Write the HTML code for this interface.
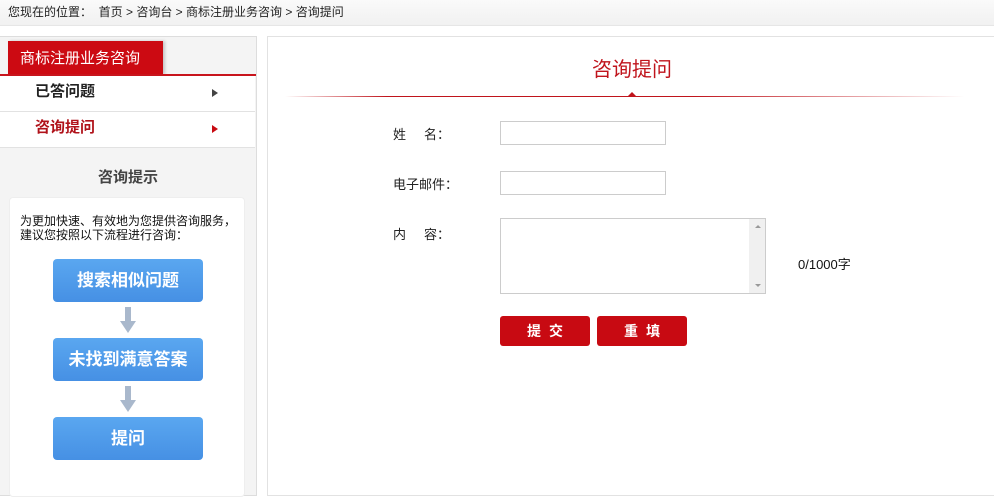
<!DOCTYPE html>
<html><head><meta charset="utf-8"><style>
*{margin:0;padding:0;box-sizing:border-box}
body{width:994px;height:491px;overflow:hidden;background:#fff;font-family:"Liberation Sans","Noto Sans CJK SC",sans-serif;font-size:12px;color:#222;position:relative}
.a{position:absolute}
.crumb{left:0;top:0;width:994px;height:26px;background:linear-gradient(#fafafa,#f1f1f1);border-bottom:1px solid #e6e6e6;padding:3px 0 0 8px;font-size:12px;color:#222}
.left{left:0;top:36px;width:257px;height:460px;background:#f4f4f4;border:1px solid #ddd;border-left:none}
.tab{left:8px;top:41px;width:155px;height:34px;background:#cc0a12;color:#fff;font-size:15px;padding:6px 0 0 12px;box-shadow:2px 0 3px rgba(0,0,0,.2)}
.rl{left:0;top:74px;width:256px;height:2px;background:#c8141c}
.mi{left:0;width:255px;height:36px;background:#fff;border-bottom:1px solid #e2e2e2;font-size:15px;font-weight:bold;padding:4px 0 0 35px}
.tri{position:absolute;left:212px;top:13px;width:0;height:0;border-left:6px solid #444;border-top:4px solid transparent;border-bottom:4px solid transparent}
.box{left:9px;top:197px;width:236px;height:300px;background:#fff;border-radius:4px;border:1px solid #eee}
.bb{left:53px;width:150px;height:43px;border-radius:4px;background:linear-gradient(#5aa7f0,#4690e4);color:#fff;font-size:17px;text-align:center;line-height:43px;font-weight:bold}
.ar{left:120px;width:16px;height:26px}
.right{left:267px;top:36px;width:730px;height:460px;border:1px solid #e2e2e2;background:#fff}
.lab{font-size:13px;color:#222}
.inp{left:500px;width:166px;height:24px;border:1px solid #ccc;background:#fff}
.btn{top:316px;width:90px;height:30px;background:#c80a12;border-radius:3px;color:#fff;font-weight:bold;font-size:14px;text-align:center;line-height:30px;letter-spacing:8px;padding-left:8px}
</style></head><body>
<div class="a crumb">您现在的位置：&nbsp;&nbsp;首页 &gt; 咨询台 &gt; 商标注册业务咨询 &gt; 咨询提问</div>
<div class="a left"></div>
<div class="a tab">商标注册业务咨询</div>
<div class="a rl"></div>
<div class="a mi" style="top:76px">已答问题<span class="tri"></span></div>
<div class="a mi" style="top:112px;color:#b0121a">咨询提问<span class="tri" style="border-left-color:#c80a12"></span></div>
<div class="a" style="left:0;top:166px;width:256px;text-align:center;font-size:15px;font-weight:bold;color:#444">咨询提示</div>
<div class="a box"></div>
<div class="a" style="left:20px;top:214px;font-size:12px;line-height:14px;color:#111">为更加快速、有效地为您提供咨询服务，<br>建议您按照以下流程进行咨询：</div>
<div class="a bb" style="top:259px">搜索相似问题</div>
<div class="a bb" style="top:338px">未找到满意答案</div>
<div class="a bb" style="top:417px">提问</div>
<svg class="a ar" style="top:307px" viewBox="0 0 16 26"><path d="M5 0h6v14h5l-8 12-8-12h5z" fill="#a9b8cc"/></svg>
<svg class="a ar" style="top:386px" viewBox="0 0 16 26"><path d="M5 0h6v14h5l-8 12-8-12h5z" fill="#a9b8cc"/></svg>
<div class="a right"></div>
<div class="a" style="left:592px;top:53px;font-size:20px;color:#c0141c">咨询提问</div>
<div class="a" style="left:285px;top:96px;width:680px;height:1px;background:linear-gradient(90deg,rgba(200,20,28,0),#c0141c 15%,#c0141c 60%,rgba(200,20,28,0))"></div>
<div class="a" style="left:628px;top:92px;width:0;height:0;border-left:4px solid transparent;border-right:4px solid transparent;border-bottom:4px solid #c0141c"></div>
<div class="a lab" style="left:393px;top:124px">姓&nbsp;&nbsp;&nbsp;&nbsp;&nbsp;名：</div>
<div class="a lab" style="left:393px;top:174px">电子邮件：</div>
<div class="a lab" style="left:393px;top:224px">内&nbsp;&nbsp;&nbsp;&nbsp;&nbsp;容：</div>
<div class="a inp" style="top:121px"></div>
<div class="a inp" style="top:171px"></div>
<div class="a" style="left:500px;top:218px;width:266px;height:76px;border:1px solid #ccc;background:#fff">
<div style="position:absolute;right:0;top:0;width:16px;height:74px;background:#f0f0f0"></div>
<div style="position:absolute;right:4px;top:6px;border-left:3px solid transparent;border-right:3px solid transparent;border-bottom:3px solid #999"></div>
<div style="position:absolute;right:4px;bottom:6px;border-left:3px solid transparent;border-right:3px solid transparent;border-top:3px solid #999"></div>
</div>
<div class="a" style="left:798px;top:254px;font-size:13px;color:#111">0/1000字</div>
<div class="a btn" style="left:500px">提交</div>
<div class="a btn" style="left:597px">重填</div>
</body></html>
